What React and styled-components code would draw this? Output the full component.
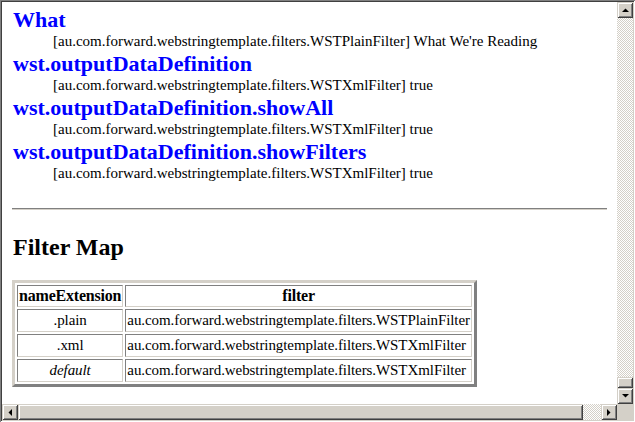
import React from 'react'
import styled, { createGlobalStyle } from 'styled-components'

const GlobalStyle = createGlobalStyle`
    html, body {
        margin: 0;
        padding: 0;
        background: #d4d0c8;
    }
`

const entries = [
    { name: 'What', filter: 'au.com.forward.webstringtemplate.filters.WSTPlainFilter', value: "What We're Reading" },
    { name: 'wst.outputDataDefinition', filter: 'au.com.forward.webstringtemplate.filters.WSTXmlFilter', value: 'true' },
    { name: 'wst.outputDataDefinition.showAll', filter: 'au.com.forward.webstringtemplate.filters.WSTXmlFilter', value: 'true' },
    { name: 'wst.outputDataDefinition.showFilters', filter: 'au.com.forward.webstringtemplate.filters.WSTXmlFilter', value: 'true' },
]

const filterMap = [
    { ext: '.plain', filter: 'au.com.forward.webstringtemplate.filters.WSTPlainFilter' },
    { ext: '.xml', filter: 'au.com.forward.webstringtemplate.filters.WSTXmlFilter' },
    { ext: 'default', filter: 'au.com.forward.webstringtemplate.filters.WSTXmlFilter', italic: true },
]

const arrows = {
    up: '0,4 7,4 3.5,0.5',
    down: '0,0 7,0 3.5,3.5',
    left: '4,0 4,7 0.5,3.5',
    right: '0,0 0,7 3.5,3.5',
}

const Arrow = ({ dir }) => {
    const vertical = dir === 'up' || dir === 'down'
    return (
        <svg width={vertical ? 7 : 4} height={vertical ? 4 : 7} viewBox={vertical ? '0 0 7 4' : '0 0 4 7'}>
            <polygon points={arrows[dir]} fill="#000" />
        </svg>
    )
}

const App = () => {
    return (
        <>
            <GlobalStyle />
            <Window>
                <Viewport>
                    <DefList>
                        {entries.map((e) => (
                            <React.Fragment key={e.name}>
                                <Term>{e.name}</Term>
                                <Desc>[{e.filter}] {e.value}</Desc>
                            </React.Fragment>
                        ))}
                    </DefList>
                    <Rule />
                    <SectionTitle>Filter Map</SectionTitle>
                    <MapTable>
                        <tbody>
                            <tr>
                                <HeadCell>nameExtension</HeadCell>
                                <HeadCell>filter</HeadCell>
                            </tr>
                            {filterMap.map((row, i) => (
                                <tr key={i}>
                                    <Cell $center $italic={row.italic}>{row.ext}</Cell>
                                    <Cell>{row.filter}</Cell>
                                </tr>
                            ))}
                        </tbody>
                    </MapTable>
                </Viewport>
                <VScroll>
                    <ScrollButton><Arrow dir="up" /></ScrollButton>
                    <Track />
                    <Thumb $size={11} />
                    <ScrollButton><Arrow dir="down" /></ScrollButton>
                </VScroll>
                <HScroll>
                    <ScrollButton><Arrow dir="left" /></ScrollButton>
                    <Thumb $size={565} />
                    <Track />
                    <ScrollButton><Arrow dir="right" /></ScrollButton>
                </HScroll>
                <Corner />
            </Window>
        </>
    )
}

export default App

const Window = styled.div`
    box-sizing: border-box;
    width: 635px;
    height: 422px;
    padding: 2px;
    display: grid;
    grid-template-columns: 1fr 16px;
    grid-template-rows: 1fr 16px;
    background: #d4d0c8;
    box-shadow:
        inset 1px 1px #808080,
        inset -1px -1px #ffffff,
        inset 2px 2px #404040,
        inset -2px -2px #d4d0c8;
`

const Viewport = styled.div`
    overflow: hidden;
    background: #fff;
    padding: 5px 10px 0 11px;
    font-family: "Liberation Serif", "Times New Roman", serif;
    color: #000;
`

const DefList = styled.dl`
    margin: 0;
`

const Term = styled.dt`
    font-size: 22px;
    line-height: 25px;
    font-weight: 700;
    color: #0000ff;
    white-space: nowrap;
`

const Desc = styled.dd`
    margin: 0 0 0 40px;
    font-size: 15px;
    line-height: 19px;
    white-space: nowrap;
`

const Rule = styled.hr`
    margin: 25px 0 0 -1px;
    height: 0;
    border: none;
    border-top: 1px solid #808080;
    border-bottom: 1px solid #d4d0c8;
`

const SectionTitle = styled.h2`
    margin: 24px 0 19px 0;
    font-size: 24px;
    line-height: 27px;
    font-weight: 700;
`

const MapTable = styled.table`
    margin-left: -1px;
    border-collapse: separate;
    border-spacing: 2px;
    border: 3px solid;
    border-color: #d4d0c8 #808080 #808080 #d4d0c8;
`

const HeadCell = styled.th`
    padding: 1px;
    border: 1px solid;
    border-color: #808080 #d4d0c8 #d4d0c8 #808080;
    font-size: 16px;
    line-height: 18px;
    font-weight: 700;
    letter-spacing: -0.2px;
    text-align: center;
    white-space: nowrap;
`

const Cell = styled.td`
    padding: 1px;
    border: 1px solid;
    border-color: #808080 #d4d0c8 #d4d0c8 #808080;
    font-size: 15px;
    line-height: 19px;
    letter-spacing: -0.08px;
    text-align: ${(p) => (p.$center ? 'center' : 'left')};
    font-style: ${(p) => (p.$italic ? 'italic' : 'normal')};
    white-space: nowrap;
`

const VScroll = styled.div`
    display: flex;
    flex-direction: column;
`

const HScroll = styled.div`
    display: flex;
    flex-direction: row;
`

const bevel = `
    background: #d4d0c8;
    box-shadow:
        inset 1px 1px #d4d0c8,
        inset -1px -1px #404040,
        inset 2px 2px #ffffff,
        inset -2px -2px #808080;
`

const ScrollButton = styled.div`
    flex: 0 0 16px;
    width: 16px;
    height: 16px;
    display: flex;
    align-items: center;
    justify-content: center;
    ${bevel}
`

const Thumb = styled.div`
    flex: 0 0 ${(p) => p.$size}px;
    ${bevel}
`

const Track = styled.div`
    flex: 1;
    background: repeating-conic-gradient(#d4d0c8 0 25%, #ffffff 0 50%) 0 0 / 2px 2px;
`

const Corner = styled.div`
    background: #d4d0c8;
`
